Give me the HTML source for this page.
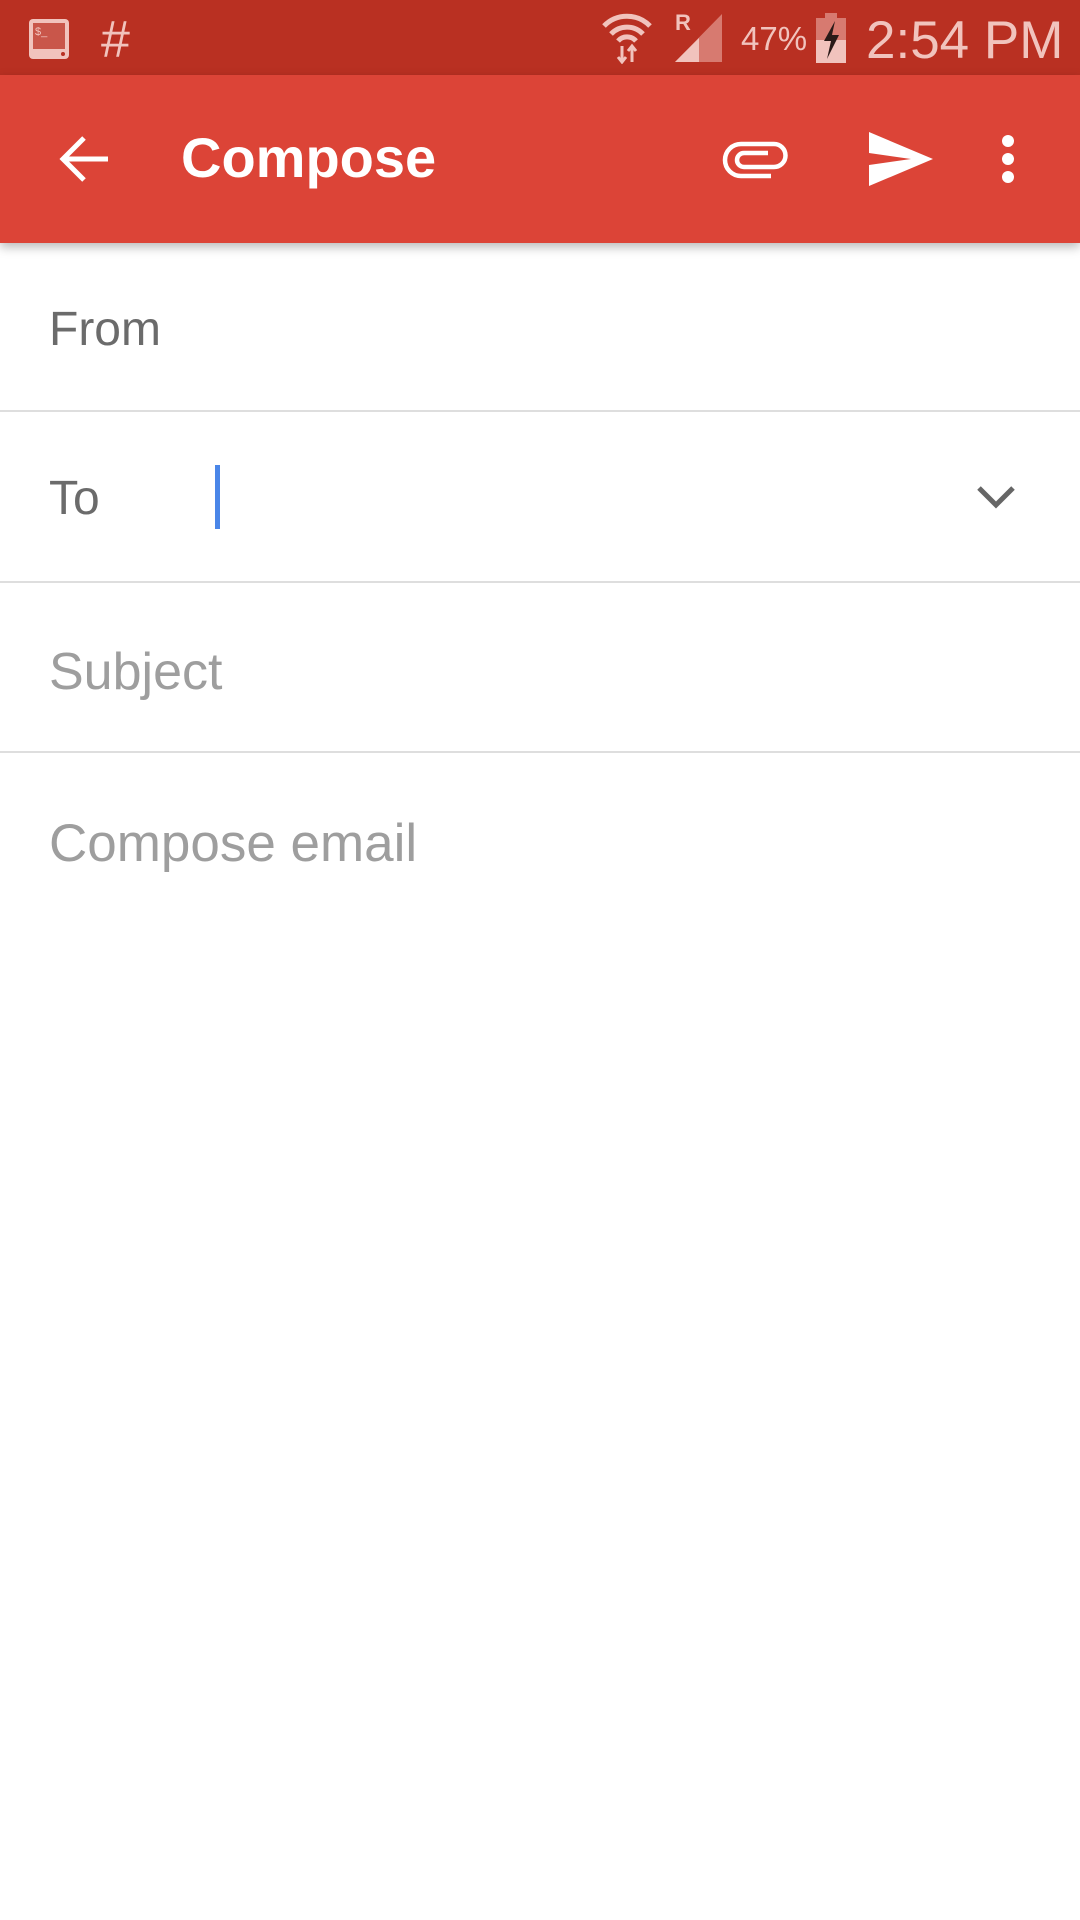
<!DOCTYPE html>
<html><head><meta charset="utf-8"><style>
*{margin:0;padding:0;box-sizing:border-box}
body{width:1080px;height:1920px;background:#fff;position:relative;overflow:hidden;font-family:"Liberation Sans",sans-serif}
.sb{position:absolute;left:0;top:0;width:1080px;height:75px;background:#b93022}
.ab{position:absolute;left:0;top:75px;width:1080px;height:168px;background:#dc4437;box-shadow:0 4px 10px rgba(0,0,0,.28)}
.t{position:absolute;white-space:nowrap}
.hr{position:absolute;left:0;width:1080px;height:2px;background:#dedede}
</style></head><body>
<div class="sb">
<svg class="t" style="left:27px;top:17px" width="44" height="44" viewBox="0 0 44 44"><rect x="2" y="2" width="40" height="40" rx="4" fill="#f1c3bd"/><rect x="6" y="6" width="32" height="26" fill="#c9564a"/><text x="8" y="18" font-size="11" fill="#f1c3bd" font-family="Liberation Sans">$_</text><circle cx="36" cy="37" r="2" fill="#b93022"/></svg>
<div class="t" style="left:101px;top:10px;font-size:52px;color:#f1c3bd">#</div>
<svg class="t" style="left:600px;top:10px" width="54" height="54" viewBox="0 0 54 54" fill="none" stroke="#f1c3bd" stroke-width="5"><path d="M4 16 A32 32 0 0 1 50 16"/><path d="M11 24 A22 22 0 0 1 43 24"/><path d="M18 31 A12 12 0 0 1 36 31"/><path d="M22 36v16M18 47l4 5 4-5M32 52V36M28 41l4-5 4 5" stroke-width="3"/></svg>
<div class="t" style="left:675px;top:10px;font-size:22px;font-weight:bold;color:#f1c3bd">R</div>
<svg class="t" style="left:673px;top:12px" width="50" height="50" viewBox="0 0 50 50"><path d="M2 50 L49 2 V50Z" fill="#d77a70"/><path d="M2 50 L26 26 V50Z" fill="#f1c3bd"/></svg>
<div class="t" style="left:741px;top:20px;font-size:33px;color:#f1c3bd">47%</div>
<svg class="t" style="left:816px;top:13px" width="30" height="50" viewBox="0 0 30 50"><rect x="9" y="0" width="12" height="5" fill="#d77a70"/><rect x="0" y="5" width="30" height="45" fill="#d77a70"/><rect x="0" y="27" width="30" height="23" fill="#f1c3bd"/><path d="M19 8 L8 28 H15 L11 46 L23 22 H16Z" fill="#2a1a18"/></svg>
<div class="t" style="left:866px;top:10px;font-size:53px;color:#f1c3bd">2:54 PM</div>
</div>
<div class="ab">
<svg class="t" style="left:58px;top:60px" width="52" height="48" viewBox="0 0 52 48" fill="none" stroke="#fff" stroke-width="5"><path d="M50 24H5M26 3L5 24l21 21"/></svg>
<div class="t" style="left:181px;top:50px;font-size:56px;font-weight:bold;color:#fff">Compose</div>
<svg class="t" style="left:722px;top:64px" width="68" height="42" viewBox="0 0 68 42" fill="none" stroke="#fff" stroke-width="4.5"><path d="M46 14H22a7 7 0 0 0 0 14h30a11.5 11.5 0 0 0 0-23H19A16 16 0 0 0 19 37h30"/></svg>
<svg class="t" style="left:869px;top:57px" width="64" height="54" viewBox="0 0 64 54"><path d="M0 0 L64 27 L0 54 L0 33 L42 27 L0 21Z" fill="#fff"/></svg>
<svg class="t" style="left:1000px;top:60px" width="16" height="48" viewBox="0 0 16 48" fill="#fff"><circle cx="8" cy="6" r="6"/><circle cx="8" cy="24" r="6"/><circle cx="8" cy="42" r="6"/></svg>
</div>
<div class="t" style="left:49px;top:302px;font-size:48px;color:#6b6b6b">From</div>
<div class="hr" style="top:410px"></div>
<div class="t" style="left:49px;top:471px;font-size:48px;color:#6b6b6b">To</div>
<div class="t" style="left:215px;top:465px;width:5px;height:64px;background:#4a86e8"></div>
<svg class="t" style="left:976px;top:485px" width="40" height="24" viewBox="0 0 40 24" fill="none" stroke="#666" stroke-width="5"><path d="M3 3l17 17L37 3"/></svg>
<div class="hr" style="top:581px"></div>
<div class="t" style="left:49px;top:642px;font-size:52px;color:#9e9e9e">Subject</div>
<div class="hr" style="top:751px"></div>
<div class="t" style="left:49px;top:813px;font-size:53px;color:#9e9e9e">Compose email</div>
</body></html>
